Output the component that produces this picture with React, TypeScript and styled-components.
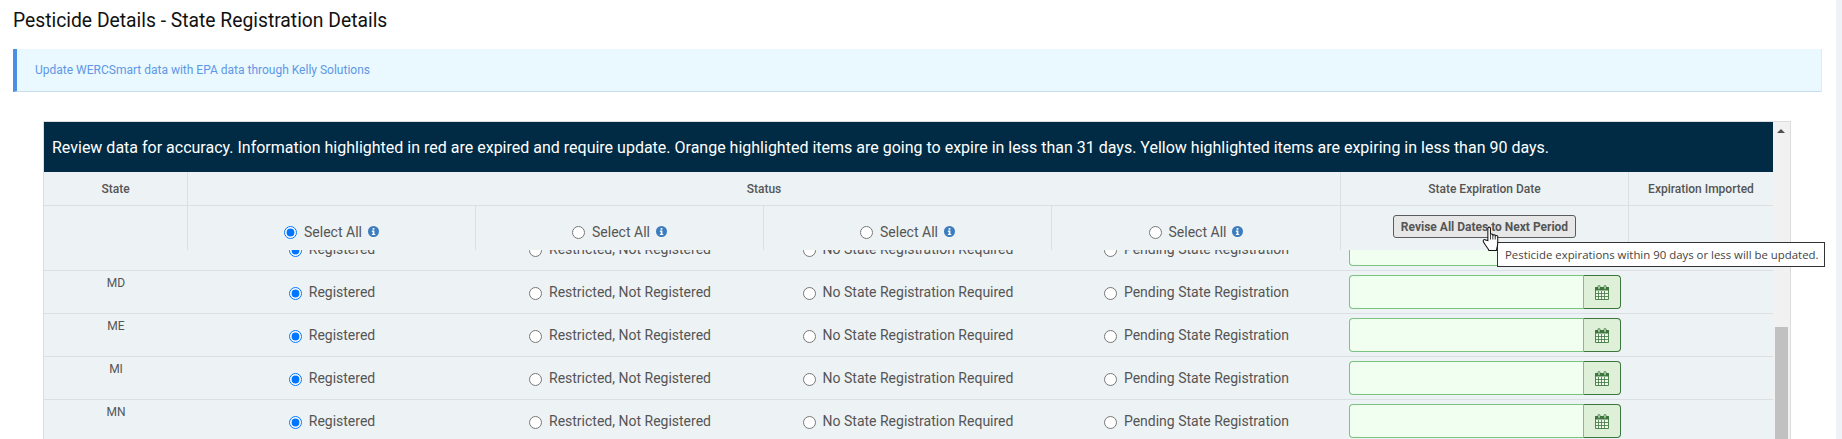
import React from 'react';
import styled, { createGlobalStyle } from 'styled-components';

const GlobalStyle = createGlobalStyle`
  html, body {
    margin: 0;
    padding: 0;
    background: #fff;
    overflow: hidden;
  }

  * {
    box-sizing: border-box;
  }
`;

const COLUMNS = '144px repeat(3, 288px) 289px 288px 144px';

const Page = styled.div`
  display: flex;
  width: 1842px;
  height: 439px;
  overflow: hidden;
  font-family: 'Roboto', 'Liberation Sans', sans-serif;
`;

const Content = styled.main`
  flex: 1;
  padding: 9px 15px 0 13px;
`;

const PageScrollbar = styled.div`
  width: 6px;
  background: #eff2f6;
`;

const Title = styled.h1`
  margin: 0;
  height: 40px;
  font-size: 19.3px;
  line-height: 24px;
  font-weight: 400;
  color: #111;
`;

const Alert = styled.div`
  display: flex;
  align-items: center;
  height: 43px;
  padding-left: 18px;
  background: #e9f9ff;
  border-left: 4px solid #4a8fe3;
  border-bottom: 1px solid #c6ddf1;
  box-shadow: 1px 0 0 #dcebf7;
  font-size: 12px;
  color: #5f97e6;
`;

const Frame = styled.section`
  display: flex;
  width: 1748px;
  margin: 29px 0 0 30px;
  border: 1px solid #dcdcdc;
  border-bottom: 0;
`;

const TableArea = styled.div`
  width: 1729px;
  height: 317px;
  display: flex;
  flex-direction: column;
`;

const Banner = styled.div`
  display: flex;
  align-items: center;
  height: 50px;
  padding-left: 8px;
  background: #012b45;
  color: #fff;
  font-size: 16px;
`;

const TableHead = styled.div`
  position: relative;
  z-index: 2;
  background: #edf2f4;
`;

const HeadRow = styled.div<{ $tall?: boolean }>`
  display: grid;
  grid-template-columns: ${COLUMNS};
  height: ${(p) => (p.$tall ? '44px' : '34px')};
  border-bottom: ${(p) => (p.$tall ? '0' : '1px solid #dcdfe3')};
`;

const HeadCell = styled.div<{ $span?: number; $last?: boolean }>`
  position: relative;
  display: flex;
  align-items: center;
  justify-content: center;
  gap: 7px;
  grid-column: span ${(p) => p.$span ?? 1};
  border-right: ${(p) => (p.$last ? '0' : '1px solid #dcdfe3')};
  font-size: 12px;
  font-weight: 500;
  color: #555;
`;

const SelectCell = styled(HeadCell)`
  padding-top: 7px;
  gap: 6px;
`;

const Body = styled.div`
  flex: 1;
  overflow: hidden;
`;

const Rows = styled.div`
  margin-top: -22px;
`;

const Row = styled.div`
  display: grid;
  grid-template-columns: ${COLUMNS};
  height: 43px;
  background: #edf2f4;
  border-bottom: 1px solid #dcdfe3;
`;

const StateCell = styled.div`
  padding-top: 3px;
  text-align: center;
  font-size: 12px;
  line-height: 18px;
  color: #555;
`;

const Choice = styled.label`
  display: flex;
  align-items: center;
  justify-content: center;
  gap: 7px;
  font-size: 14px;
  font-weight: 400;
  color: #555;
`;

const Radio = styled.input.attrs({ type: 'radio', readOnly: true })`
  width: 13px;
  height: 13px;
  margin: 2px 0 0;
`;

const DateCell = styled.div`
  display: flex;
  padding: 4px 8px 0 8px;
`;

const DateInput = styled.input.attrs({ type: 'text', readOnly: true })`
  flex: 1;
  min-width: 0;
  height: 34px;
  background: #f0fff0;
  border: 1px solid #7bc47f;
  border-right: 0;
  border-radius: 4px 0 0 4px;
  outline: 0;
`;

const DateAddon = styled.span`
  display: flex;
  align-items: center;
  justify-content: center;
  width: 38px;
  height: 34px;
  background: #dff0d8;
  border: 1px solid #3c763d;
  border-left-color: #7bc47f;
  border-radius: 0 4px 4px 0;
  color: #3c763d;
`;

const ReviseButton = styled.button`
  width: 183px;
  height: 23px;
  margin-top: -3px;
  padding: 0;
  background: #e7e7e7;
  border: 1px solid #5c5c5c;
  border-radius: 3px;
  font-family: inherit;
  font-size: 12px;
  font-weight: 700;
  color: #555;
`;

const Tooltip = styled.div`
  position: absolute;
  left: 156px;
  top: 36px;
  width: 328px;
  height: 25px;
  padding-left: 7px;
  background: #fff;
  border: 1px solid #333;
  font-family: 'Open Sans', 'Noto Sans', sans-serif;
  font-size: 11.4px;
  font-weight: 400;
  line-height: 23px;
  white-space: nowrap;
  color: #444;
`;

const Cursor = styled.svg`
  position: absolute;
  left: 141px;
  top: 20px;
  z-index: 3;
`;

const ScrollTrack = styled.div`
  width: 17px;
  background: #f1f1f1;
`;

const ScrollArrow = styled.div`
  width: 0;
  height: 0;
  margin: 7px 0 0 4px;
  border-left: 4px solid transparent;
  border-right: 4px solid transparent;
  border-bottom: 4px solid #505050;
`;

const ScrollThumb = styled.div`
  width: 13px;
  height: 200px;
  margin: 194px 0 0 2px;
  background: #c1c1c1;
`;

const InfoIcon = () => (
  <svg width="11" height="11" viewBox="0 0 11 11" aria-hidden="true">
    <circle cx="5.5" cy="5.5" r="5.5" fill="#3a7cbd" />
    <rect x="4.6" y="2" width="1.8" height="1.7" fill="#fff" />
    <path d="M3.8 4.6h2.6v3.3h.9v1.1H3.8V7.9h.9V5.7h-.9z" fill="#fff" />
  </svg>
);

const CalendarIcon = () => (
  <svg width="14" height="15" viewBox="0 0 14 15" aria-hidden="true">
    <path d="M0.5 2.5h13v12h-13z" fill="#eef7ea" stroke="currentColor" strokeWidth="0.9" />
    <path d="M0.5 2.5h13v2.5h-13z" fill="currentColor" stroke="currentColor" />
    <path d="M3 .8h2v3.4H3zM9 .8h2v3.4H9z" fill="#eef7ea" stroke="currentColor" strokeWidth="0.8" />
    <path d="M3.5 6v8.5M6.5 6v8.5M9.5 6v8.5M1 8.5h12M1 11.5h12" stroke="currentColor" strokeWidth="0.8" fill="none" />
  </svg>
);

const HandCursor = () => (
  <Cursor width="19" height="26" viewBox="0 0 18 25" aria-hidden="true">
    <path
      d="M5.5 14V2.3C5.5.7 8 .7 8 2.3V8.5C8 7.3 10.3 7.3 10.3 8.5V9.3C10.3 8.1 12.6 8.1 12.6 9.3V10C12.6 8.9 15 8.9 15 10.2V16C15 19 14.3 20.5 13.7 23.5H6.5C5.5 21 3.5 19.5 1.3 15.5C.3 13.5 2 12.3 3.3 13.5Z"
      fill="#fff"
      stroke="#111"
      strokeWidth="1"
    />
    <path d="M8 8.5V13M10.3 9V13M12.6 9.8V13" stroke="#111" strokeWidth="0.8" fill="none" />
  </Cursor>
);

const statuses = [
  'Registered',
  'Restricted, Not Registered',
  'No State Registration Required',
  'Pending State Registration',
];

const states = ['MA', 'MD', 'ME', 'MI', 'MN'];

const App = () => {
  return (
    <Page>
      <GlobalStyle />
      <Content>
        <Title>Pesticide Details - State Registration Details</Title>
        <Alert>Update WERCSmart data with EPA data through Kelly Solutions</Alert>

        <Frame>
          <TableArea>
            <Banner>
              Review data for accuracy. Information highlighted in red are expired and require update. Orange highlighted items are going to expire in less than 31 days. Yellow highlighted items are expiring in less than 90 days.
            </Banner>

            <TableHead>
              <HeadRow>
                <HeadCell>State</HeadCell>
                <HeadCell $span={4}>Status</HeadCell>
                <HeadCell>State Expiration Date</HeadCell>
                <HeadCell $last>Expiration Imported</HeadCell>
              </HeadRow>
              <HeadRow $tall>
                <HeadCell />
                {statuses.map((status, i) => (
                  <SelectCell key={status}>
                    <Choice>
                      <Radio name="select-all" defaultChecked={i === 0} />
                      Select All
                    </Choice>
                    <InfoIcon />
                  </SelectCell>
                ))}
                <HeadCell>
                  <ReviseButton>Revise All Dates to Next Period</ReviseButton>
                  <HandCursor />
                  <Tooltip>Pesticide expirations within 90 days or less will be updated.</Tooltip>
                </HeadCell>
                <HeadCell $last />
              </HeadRow>
            </TableHead>

            <Body>
              <Rows>
                {states.map((state) => (
                  <Row key={state}>
                    <StateCell>{state}</StateCell>
                    {statuses.map((status, i) => (
                      <Choice key={status}>
                        <Radio name={state} defaultChecked={i === 0} />
                        {status}
                      </Choice>
                    ))}
                    <DateCell>
                      <DateInput />
                      <DateAddon>
                        <CalendarIcon />
                      </DateAddon>
                    </DateCell>
                    <div />
                  </Row>
                ))}
              </Rows>
            </Body>
          </TableArea>

          <ScrollTrack>
            <ScrollArrow />
            <ScrollThumb />
          </ScrollTrack>
        </Frame>
      </Content>
      <PageScrollbar />
    </Page>
  );
};

export default App;
